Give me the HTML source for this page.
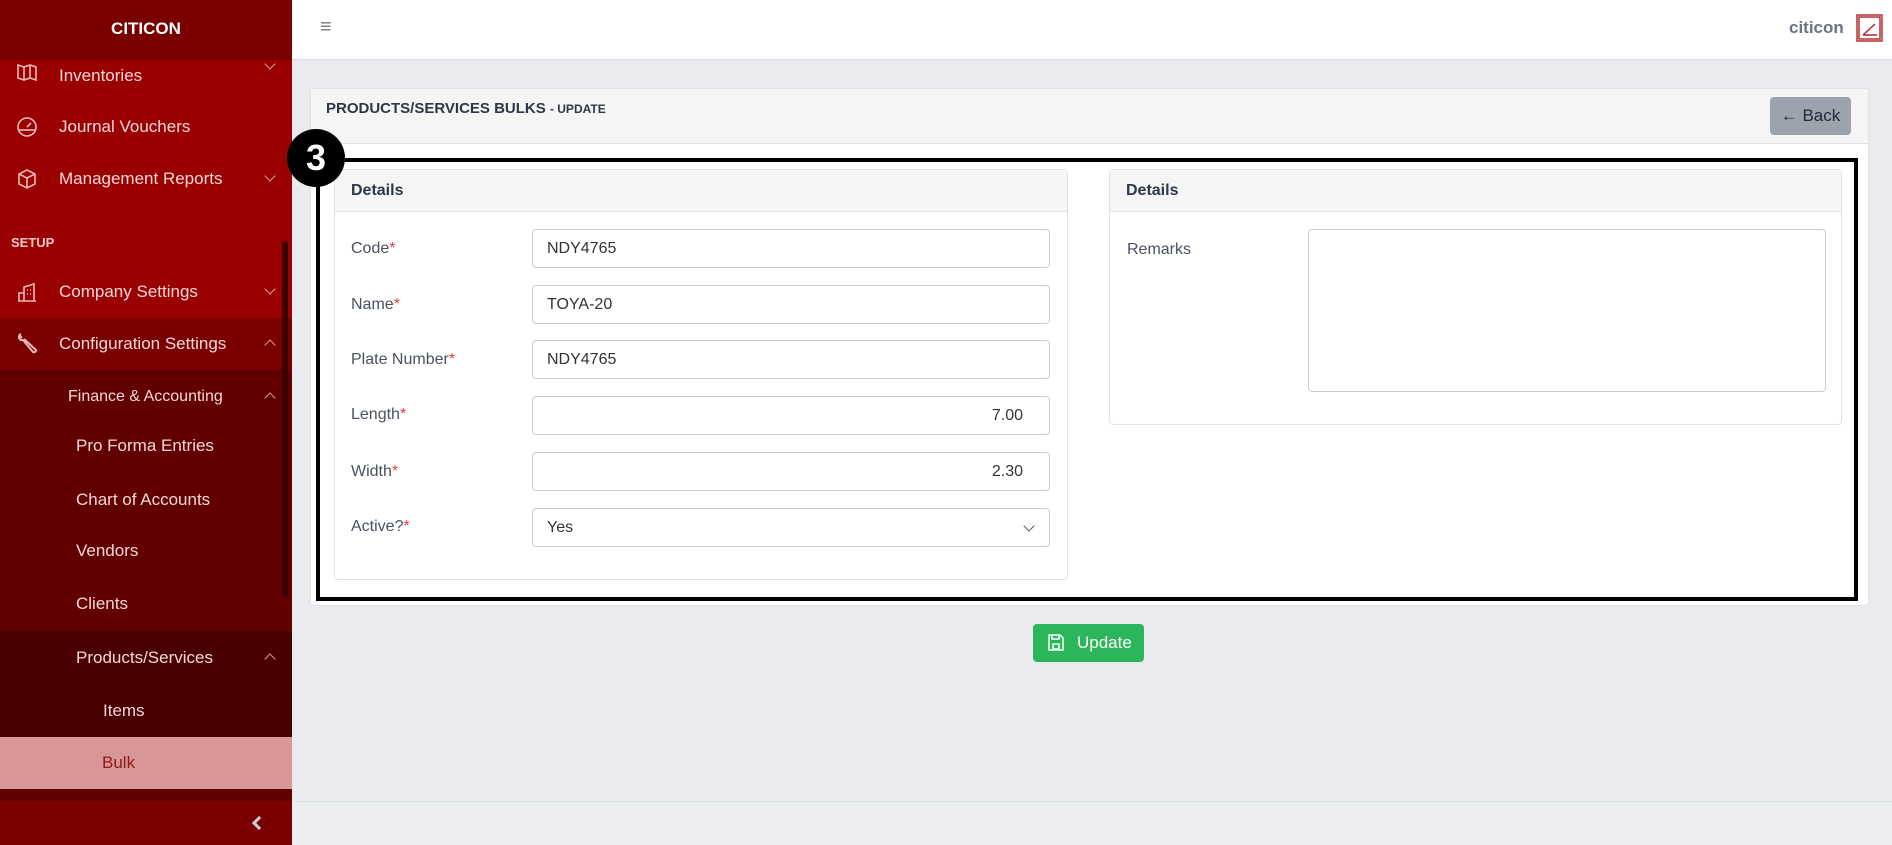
<!DOCTYPE html>
<html><head><meta charset="utf-8"><style>
*{box-sizing:border-box;margin:0;padding:0}
body{width:1892px;height:845px;overflow:hidden;background:#e9ebee;font-family:"Liberation Sans",sans-serif;position:relative}
.abs{position:absolute}
.sb{left:0;top:0;width:292px;height:845px;background:#9b0000;color:#f3d6d6;font-size:17px}
.sb .it{position:absolute;left:0;width:292px;display:flex;align-items:center}
.chev{position:absolute;right:18px;width:8px;height:8px;border-right:1.5px solid #d9a0a0;border-bottom:1.5px solid #d9a0a0}
.dn{transform:rotate(45deg)}.up{transform:rotate(-135deg)}
.lbl{font-size:16px;color:#4a5060;position:absolute;left:351px}
.req{color:#e53e3e}
.inp{position:absolute;left:532px;width:518px;height:39px;border:1px solid #c9ccd2;border-radius:4px;background:#fff;font-size:16px;color:#333;padding:0 14px;display:flex;align-items:center}
</style></head><body>
<div class="abs sb">
  <div class="abs" style="left:0;top:0;width:292px;height:60px;background:#7a0000;color:#fff;font-weight:bold;font-size:17px;text-align:center;line-height:58px">CITICON</div>
  <div class="it" style="top:60px;height:30px"><svg class="abs" style="left:16px;top:2px" width="22" height="20" viewBox="0 0 22 20" fill="none" stroke="#e8b8b8" stroke-width="1.6"><path d="M2 3l6 2 6-2 6 2v13l-6-2-6 2-6-2z M8 5v13 M14 3v13"/></svg><span class="abs" style="left:59px;top:6px">Inventories</span><div class="chev dn" style="top:0"></div></div>
  <div class="it" style="top:110px;height:34px"><svg class="abs" style="left:16px" width="22" height="22" viewBox="0 0 22 22" fill="none" stroke="#e8b8b8" stroke-width="1.6"><circle cx="11" cy="11" r="9"/><path d="M11 11l4-4"/><path d="M3 14h16" /></svg><span class="abs" style="left:59px">Journal Vouchers</span></div>
  <div class="it" style="top:162px;height:34px"><svg class="abs" style="left:16px" width="22" height="22" viewBox="0 0 22 22" fill="none" stroke="#e8b8b8" stroke-width="1.6"><path d="M11 2l8 4v10l-8 4-8-4V6z M3 6l8 4 8-4 M11 10v10"/></svg><span class="abs" style="left:59px">Management Reports</span><div class="chev dn" style="top:10px"></div></div>
  <div class="abs" style="left:11px;top:235px;font-size:13px;font-weight:bold;color:#f0c8c8">SETUP</div>
  <div class="it" style="top:275px;height:34px"><svg class="abs" style="left:16px" width="22" height="22" viewBox="0 0 22 22" fill="none" stroke="#e8b8b8" stroke-width="1.6"><path d="M2 20h18 M3 20V12h5v8 M8 20V6l10-3v17 M11 9h1 M14 9h1 M11 13h1 M14 13h1"/></svg><span class="abs" style="left:59px">Company Settings</span><div class="chev dn" style="top:10px"></div></div>
  <div class="abs" style="left:0;top:318px;width:292px;height:52px;background:#7a0000"></div>
  <div class="it" style="top:327px;height:34px"><svg class="abs" style="left:16px" width="22" height="24" viewBox="0 0 22 24" fill="none" stroke="#e8b8b8" stroke-width="2"><path d="M3 3l3 3 M5 2a3 3 0 0 0 2 6l10 12a2 2 0 0 0 3-2L8 7"/></svg><span class="abs" style="left:59px">Configuration Settings</span><div class="chev up" style="top:14px"></div></div>
  <div class="abs" style="left:0;top:370px;width:292px;height:261px;background:#620000"></div>
  <div class="it" style="top:380px;height:34px;font-size:16px"><span class="abs" style="left:68px">Finance &amp; Accounting</span><div class="chev up" style="top:14px"></div></div>
  <div class="it" style="top:429px;height:34px"><span class="abs" style="left:76px">Pro Forma Entries</span></div>
  <div class="it" style="top:483px;height:34px"><span class="abs" style="left:76px">Chart of Accounts</span></div>
  <div class="it" style="top:534px;height:34px"><span class="abs" style="left:76px">Vendors</span></div>
  <div class="it" style="top:587px;height:34px"><span class="abs" style="left:76px">Clients</span></div>
  <div class="abs" style="left:0;top:631px;width:292px;height:170px;background:#4a0000"></div>
  <div class="it" style="top:641px;height:34px"><span class="abs" style="left:76px">Products/Services</span><div class="chev up" style="top:14px"></div></div>
  <div class="it" style="top:694px;height:34px"><span class="abs" style="left:103px">Items</span></div>
  <div class="abs" style="left:0;top:737px;width:292px;height:52px;background:#d89696;color:#8b1a1a"><span class="abs" style="left:102px;top:16px">Bulk</span></div>
  <div class="abs" style="left:0;top:789px;width:292px;height:12px;background:#620000"></div>
  <div class="abs" style="left:0;top:801px;width:292px;height:44px;background:#7a0000"><div class="abs" style="left:254px;top:17px;width:10px;height:10px;border-left:3px solid #c9ccd8;border-bottom:3px solid #c9ccd8;transform:rotate(45deg)"></div></div>
  <div class="abs" style="left:282px;top:241px;width:6px;height:356px;background:#3a0000;border-radius:3px"></div>
</div>
<div class="abs" style="left:292px;top:0;width:1600px;height:60px;background:#fff;border-bottom:1px solid #dadde2"></div>
<div class="abs" style="left:320px;top:16px;font-size:20px;color:#777">≡</div>
<div class="abs" style="left:1789px;top:18px;font-size:17px;font-weight:bold;color:#6b7280">citicon</div>
<svg class="abs" style="left:1856px;top:14px" width="27" height="28" viewBox="0 0 27 28" fill="none" stroke="#b22222" stroke-width="1.4"><rect x="1" y="1" width="25" height="26"/><rect x="3" y="3" width="21" height="22"/><path d="M7 21l12-11 M7 21h14"/></svg>
<div class="abs" style="left:292px;top:801px;width:1600px;height:44px;background:#eceef1;border-top:1px solid #dcdfe3"></div>
<div class="abs" style="left:310px;top:88px;width:1559px;height:518px;background:#fff;border:1px solid #e0e2e6;border-radius:4px"></div>
<div class="abs" style="left:311px;top:89px;width:1557px;height:55px;background:#f5f5f5;border-bottom:1px solid #e0e2e6"></div>
<div class="abs" style="left:326px;top:100px;font-size:15px;font-weight:bold;color:#2d3748">PRODUCTS/SERVICES BULKS <span style="font-size:12px">- UPDATE</span></div>
<div class="abs" style="left:1770px;top:97px;width:81px;height:38px;background:#9ca3af;border-radius:4px;color:#1f2937;font-size:17px;line-height:38px;text-align:center">← Back</div>
<div class="abs" style="left:334px;top:169px;width:734px;height:411px;border:1px solid #e0e2e6;border-radius:4px;background:#fff"></div>
<div class="abs" style="left:335px;top:170px;width:732px;height:42px;background:#f5f5f5;border-bottom:1px solid #e0e2e6;font-weight:bold;font-size:16px;color:#2d3748;padding:12px 16px">Details</div>
<div class="lbl" style="top:240px">Code<span class="req">*</span></div><div class="inp" style="top:229px">NDY4765</div>
<div class="lbl" style="top:296px">Name<span class="req">*</span></div><div class="inp" style="top:285px">TOYA-20</div>
<div class="lbl" style="top:351px">Plate Number<span class="req">*</span></div><div class="inp" style="top:340px">NDY4765</div>
<div class="lbl" style="top:406px">Length<span class="req">*</span></div><div class="inp" style="top:396px;justify-content:flex-end;padding-right:26px">7.00</div>
<div class="lbl" style="top:463px">Width<span class="req">*</span></div><div class="inp" style="top:452px;justify-content:flex-end;padding-right:26px">2.30</div>
<div class="lbl" style="top:518px">Active?<span class="req">*</span></div><div class="inp" style="top:508px">Yes<div class="abs" style="right:16px;top:13px;width:8px;height:8px;border-right:1.5px solid #555;border-bottom:1.5px solid #555;transform:rotate(45deg)"></div></div>
<div class="abs" style="left:1109px;top:169px;width:733px;height:256px;border:1px solid #e0e2e6;border-radius:4px;background:#fff"></div>
<div class="abs" style="left:1110px;top:170px;width:731px;height:42px;background:#f5f5f5;border-bottom:1px solid #e0e2e6;font-weight:bold;font-size:16px;color:#2d3748;padding:12px 16px">Details</div>
<div class="abs" style="left:1127px;top:241px;font-size:16px;color:#4a5060">Remarks</div>
<div class="abs" style="left:1308px;top:229px;width:518px;height:163px;border:1px solid #c9ccd2;border-radius:4px;background:#fff"></div>
<div class="abs" style="left:316px;top:158px;width:1542px;height:443px;border:4px solid #000"></div>
<div class="abs" style="left:287px;top:129px;width:58px;height:58px;border-radius:50%;background:#000;color:#fff;font-weight:bold;font-size:36px;text-align:center;line-height:58px">3</div>
<div class="abs" style="left:1033px;top:624px;width:111px;height:38px;background:#2bb65b;border-radius:4px;color:#fff;font-size:17px;line-height:38px;padding-left:44px"><svg class="abs" style="left:15px;top:10px" width="16" height="17" viewBox="0 0 16 17" fill="none" stroke="#fff" stroke-width="1.5"><path d="M1 1h11l3 3v12H1z M4 1v4h7V1 M5 10h6v5H5z"/></svg>Update</div>
</body></html>
